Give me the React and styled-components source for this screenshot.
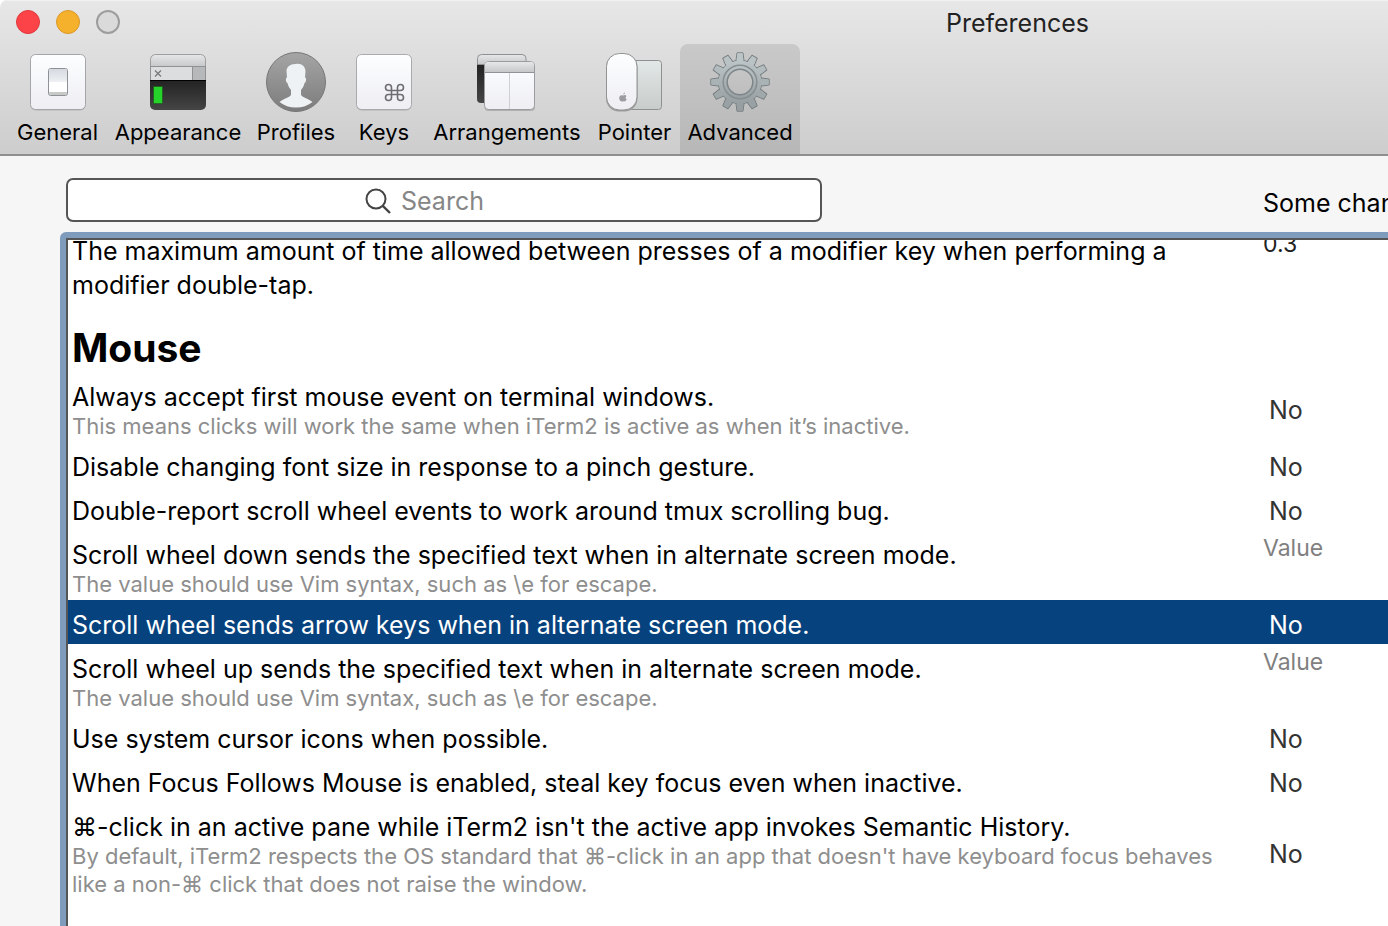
import React from "react";
import styled, { createGlobalStyle, css } from "styled-components";

const GlobalStyle = createGlobalStyle`
  *, *::before, *::after { box-sizing: border-box; }
  html, body, #root { height: 100%; }
  body {
    margin: 0;
    background: #fff;
    color: #000;
    font-family: Inter, "Liberation Sans", sans-serif;
    overflow: hidden;
  }
  button, input, select { font: inherit; color: inherit; margin: 0; }
`;

const Window = styled.div`
  display: flex;
  flex-direction: column;
  height: 100%;
  background: #f6f6f6;
  border-top-left-radius: 8px;
  overflow: hidden;
`;

const Header = styled.header`
  flex: none;
  background: linear-gradient(#e7e7e7, #cdcdcd);
  border-bottom: 2px solid #8f8f8f;
  box-shadow: inset 0 1px 0 #f2f2f2;
`;

const TitleBar = styled.div`
  display: flex;
  align-items: center;
  justify-content: space-between;
  height: 44px;
  padding: 0 299px 0 16px;
`;

const Lights = styled.div`
  display: flex;
  gap: 16px;
`;

const Light = styled.button`
  width: 24px;
  height: 24px;
  padding: 0;
  border: ${(p) => (p.$off ? 2 : 1)}px solid ${(p) => p.$edge};
  border-radius: 50%;
  background: ${(p) => p.$fill};
`;

const Title = styled.h1`
  margin: 0;
  padding-top: 2px;
  font-size: 25px;
  line-height: 32px;
  font-weight: 400;
  color: #222;
`;

const Toolbar = styled.nav`
  display: flex;
  padding-left: 8px;
`;

const Tool = styled.button`
  display: flex;
  flex-direction: column;
  align-items: center;
  gap: 6px;
  flex: none;
  width: ${(p) => p.$width}px;
  height: 110px;
  padding: 8px 0;
  border: 0;
  border-radius: 8px 8px 0 0;
  background: ${(p) => (p.$active ? "linear-gradient(#c9c9c9, #b7b7b7)" : "none")};
  font-size: 22px;
  line-height: 28px;
  white-space: nowrap;
`;

const Body = styled.main`
  flex: 1;
  display: flex;
  flex-direction: column;
  min-height: 0;
  padding: 22px 0 0 60px;
`;

const Controls = styled.div`
  display: flex;
  align-items: center;
  justify-content: space-between;
  padding-left: 6px;
  margin-bottom: 10px;
`;

const SearchBox = styled.label`
  display: flex;
  align-items: center;
  justify-content: center;
  gap: 10px;
  flex: 0 1 756px;
  height: 44px;
  padding-top: 2px;
  border: 2px solid #555;
  border-radius: 7px;
  background: #fff;
`;

const SearchInput = styled.input`
  width: 122px;
  padding: 0;
  border: 0;
  outline: 0;
  background: none;
  font-size: 25px;
  line-height: 32px;
  &::placeholder { color: #868686; opacity: 1; }
`;

const Note = styled.p`
  flex: none;
  width: 125px;
  margin: 0;
  padding-top: 6px;
  font-size: 25px;
  line-height: 32px;
  white-space: nowrap;
  overflow: hidden;
`;

const FocusRing = styled.div`
  flex: 1;
  min-height: 0;
  padding: 6px 0 0 6px;
  background: #7f9cbc;
  border-top-left-radius: 6px;
`;

const Scroller = styled.div`
  height: 100%;
  overflow: hidden;
  border: solid #555;
  border-width: 2px 0 0 2px;
  background: #fff;
`;

const Table = styled.table`
  width: 100%;
  margin-top: -16px;
  border-collapse: collapse;
  table-layout: fixed;
`;

const ValueCol = styled.col`
  width: 132px;
`;

const Row = styled.tr`
  height: 44px;
  ${(p) =>
    p.$selected &&
    css`
      background: #06427e;
      color: #fff;
    `}
`;

const NameCell = styled.td`
  padding: 10px 24px 2px 4px;
  vertical-align: top;
`;

const Name = styled.div`
  font-size: 25px;
  line-height: ${(p) => (p.$wraps ? 34 : 30)}px;
`;

const Hint = styled.div`
  font-size: 22px;
  line-height: 28px;
  color: #8e8e8e;
`;

const GroupCell = styled.th`
  height: 68px;
  padding: 20px 4px 0;
  text-align: left;
  vertical-align: top;
  font-size: 39px;
  line-height: 48px;
  font-weight: 700;
`;

const ValueCell = styled.td`
  padding: ${(p) => (p.$text ? "3px 0 0 7px" : "6px 0 0 13px")};
  vertical-align: ${(p) => (p.$text ? "top" : "middle")};
`;

const Choice = styled.select`
  display: block;
  appearance: none;
  padding: 0;
  border: 0;
  background: none;
  font-size: 25px;
  line-height: 32px;
  color: ${(p) => (p.$selected ? "#fff" : "#333")};
`;

const TextValue = styled.input`
  display: block;
  width: 100%;
  padding: 0;
  border: 0;
  background: none;
  font-size: 23px;
  line-height: ${(p) => (p.$wraps ? 34 : 30)}px;
  height: ${(p) => (p.$wraps ? 34 : 30)}px;
  color: #222;
  &::placeholder { color: #808080; opacity: 1; }
`;

const Art = ({ children }) => (
  <svg width="60" height="60" viewBox="0 0 60 60" aria-hidden="true">
    {children}
  </svg>
);

const Gradients = () => (
  <svg width="0" height="0" aria-hidden="true" display="block">
    <defs>
      <linearGradient id="plate" x2="0" y2="1">
        <stop stopColor="#fcfeff" /><stop offset="1" stopColor="#eeeef3" />
      </linearGradient>
      <linearGradient id="bar" x2="0" y2="1">
        <stop stopColor="#e6e7e8" /><stop offset="1" stopColor="#c6c8ca" />
      </linearGradient>
      <linearGradient id="dark" x2="0" y2="1">
        <stop stopColor="#222" /><stop offset="1" stopColor="#454545" />
      </linearGradient>
      <linearGradient id="disc" x2="0" y2="1">
        <stop stopColor="#a5a5a5" /><stop offset="1" stopColor="#7c7c7c" />
      </linearGradient>
      <linearGradient id="pad" x2="0" y2="1">
        <stop stopColor="#e2e8e7" /><stop offset="1" stopColor="#c8cccb" />
      </linearGradient>
      <linearGradient id="rocker" x2="0" y2="1">
        <stop stopColor="#d6dae0" /><stop offset="1" stopColor="#eef0f3" />
      </linearGradient>
      <linearGradient id="steel" x2="0" y2="1">
        <stop stopColor="#bbc4c6" /><stop offset="1" stopColor="#979fa2" />
      </linearGradient>
      <linearGradient id="hole" x2="0" y2="1">
        <stop stopColor="#c6c6c6" /><stop offset="1" stopColor="#bebebe" />
      </linearGradient>
    </defs>
  </svg>
);

const GeneralIcon = () => (
  <Art>
    <rect x="2.5" y="3.5" width="55" height="55" rx="5" fill="#b5b5b5" />
    <rect x="2.5" y="2.5" width="55" height="55" rx="5" fill="url(#plate)" stroke="#a3a5a9" />
    <rect x="20.5" y="16.5" width="19" height="27" rx="2" fill="#fff" stroke="#8d9095" />
    <rect x="21" y="17" width="18" height="13" rx="1" fill="url(#rocker)" />
    <path d="M21 40h18v2q0 1-1 1H22q-1 0-1-1z" fill="#c7c9c6" />
  </Art>
);

const AppearanceIcon = () => (
  <Art>
    <path d="M2 28H58V53a5 5 0 0 1-5 5H7a5 5 0 0 1-5-5z" fill="url(#dark)" />
    <path d="M2.500 14.500V7.500a5 5 0 0 1 5-5h45a5 5 0 0 1 5 5V14.500z" fill="url(#bar)" stroke="#9b9d9f" />
    <rect x="2" y="15" width="42" height="13" fill="#dcdddf" />
    <rect x="44" y="15" width="14" height="13" fill="#b6b8ba" />
    <path d="M2 14.500H58M44.500 14V28M2.500 14V28M57.500 14V28" stroke="#8f9193" fill="none" />
    <path d="M2 28.500H58" stroke="#000" />
    <path d="M7 18.500l6 6M13 18.500l-6 6" stroke="#777" strokeWidth="1.200" />
    <rect x="5" y="34" width="10" height="18" rx="1" fill="#1b7a1c" opacity=".7" />
    <rect x="6" y="35" width="8" height="16" fill="#25d32b" />
  </Art>
);

const ProfilesIcon = () => (
  <Art>
    <circle cx="30" cy="30" r="29.500" fill="url(#disc)" stroke="#777" />
    <path
      d="M30 12C35 11 39.500 14 39.500 19.500L39 25.500C41 26 40 30.500 38.500 31C38 34 36.500 36 35 38V42.500C36 46 42 46 46.500 50Q39.500 55.500 30 55.500T13.500 50C18 46 24 46 25 42.500V38C23.500 36 22 34 21.500 31C20 30.500 19 26 21 25.500L20.500 19C20.500 14.500 25 11.500 30 12z"
      fill="#eff2f4"
    />
  </Art>
);

const KeysIcon = () => (
  <Art>
    <rect x="2.500" y="3.500" width="55" height="55" rx="5" fill="#b0b0b0" />
    <rect x="2.500" y="2.500" width="55" height="55" rx="5" fill="url(#plate)" stroke="#a9a9ae" />
    <path
      d="M37.500 35.500a3 3 0 1 0-3 3h12a3 3 0 1 0-3-3v10a3 3 0 1 0 3-3h-12a3 3 0 1 0 3 3z"
      fill="none" stroke="#6e6e71" strokeWidth="1.600"
    />
  </Art>
);

const ArrangementsIcon = () => (
  <Art>
    <path d="M0 12H10V51H4a4 4 0 0 1-4-4z" fill="url(#dark)" />
    <path d="M.5 12.500V6.500a4 4 0 0 1 4-4H45a4 4 0 0 1 4 4V12.500z" fill="url(#bar)" stroke="#8f9193" />
    <rect x="7.500" y="10" width="50.500" height="49" rx="4" fill="#b0b0b0" />
    <rect x="7.500" y="9.500" width="50" height="48" rx="4" fill="url(#plate)" stroke="#9b9ca0" />
    <path d="M8 20V13a3 3 0 0 1 3-3H54a3 3 0 0 1 3 3V20z" fill="url(#bar)" />
    <path d="M8 20.500H57" stroke="#909295" />
    <path d="M32.500 21V57" stroke="#cfd0d3" />
  </Art>
);

const PointerIcon = () => (
  <Art>
    <rect x="20" y="8.500" width="36.500" height="49" rx="3" fill="url(#pad)" stroke="#8f9191" />
    <rect x="1" y="2" width="31.500" height="57.500" rx="13" fill="#9c9c9c" />
    <rect x="1.500" y="1.500" width="30.500" height="56.500" rx="13" fill="url(#plate)" stroke="#929292" />
    <path
      d="M18.200 42.500q.1-1.600 1.800-2q0 1.800-1.800 2M18.100 43.500q2.400-1 3.300.4q-1.700 2 .3 3.500q-1.300 2.800-3.500 1.900q-3 1-3.900-2.100q-.6-4.600 3.800-3.700"
      fill="#9c9ca0"
    />
  </Art>
);

const TEETH = Array.from({ length: 12 }, (_, i) => i * 30);
const shade = (deg) => {
  const t = (1 - Math.cos((deg * Math.PI) / 180)) / 2;
  const c = (a, b) => Math.round(a + (b - a) * t);
  return `rgb(${c(187, 151)}, ${c(196, 159)}, ${c(198, 162)})`;
};

const AdvancedIcon = () => (
  <Art>
    <g transform="translate(30 30)">
      {TEETH.map((a) => (
        <path key={a} d="M-4.200-20L-3-29.200H3L4.200-20z" transform={`rotate(${a})`} fill={shade(a)} stroke="#777f81" strokeLinejoin="round" />
      ))}
      <circle r="21.800" fill="url(#steel)" stroke="#777f81" />
      {TEETH.map((a) => (
        <path key={a} d="M-3.600-20L-2.500-28.700H2.500L3.600-20z" transform={`rotate(${a})`} fill={shade(a)} />
      ))}
      <circle r="21.300" fill="url(#steel)" />
      <circle r="16.800" fill="url(#steel)" stroke="#868e91" strokeWidth="1.500" />
      <circle r="12.800" fill="url(#hole)" stroke="#7d8588" strokeWidth="1.500" />
    </g>
  </Art>
);

const TOOLS = [
  { label: "General", width: 99, Icon: GeneralIcon },
  { label: "Appearance", width: 142, Icon: AppearanceIcon },
  { label: "Profiles", width: 94, Icon: ProfilesIcon },
  { label: "Keys", width: 82, Icon: KeysIcon },
  { label: "Arrangements", width: 164, Icon: ArrangementsIcon },
  { label: "Pointer", width: 91, Icon: PointerIcon },
  { label: "Advanced", width: 120, Icon: AdvancedIcon, active: true },
];

const MOUSE_SETTINGS = [
  {
    name: "Always accept first mouse event on terminal windows.",
    hint: "This means clicks will work the same when iTerm2 is active as when it’s inactive.",
  },
  { name: "Disable changing font size in response to a pinch gesture." },
  { name: "Double-report scroll wheel events to work around tmux scrolling bug." },
  {
    name: "Scroll wheel down sends the specified text when in alternate screen mode.",
    hint: "The value should use Vim syntax, such as \\e for escape.",
    text: true,
  },
  { name: "Scroll wheel sends arrow keys when in alternate screen mode.", selected: true },
  {
    name: "Scroll wheel up sends the specified text when in alternate screen mode.",
    hint: "The value should use Vim syntax, such as \\e for escape.",
    text: true,
  },
  { name: "Use system cursor icons when possible." },
  { name: "When Focus Follows Mouse is enabled, steal key focus even when inactive." },
  {
    name: "⌘-click in an active pane while iTerm2 isn't the active app invokes Semantic History.",
    hint: "By default, iTerm2 respects the OS standard that ⌘-click in an app that doesn't have keyboard focus behaves like a non-⌘ click that does not raise the window.",
  },
];

function Setting({ name, hint, text, value, wraps, selected }) {
  return (
    <Row $selected={selected}>
      <NameCell>
        <Name $wraps={wraps}>{name}</Name>
        {hint && <Hint>{hint}</Hint>}
      </NameCell>
      <ValueCell $text={text}>
        {text ? (
          <TextValue aria-label={name} placeholder="Value" defaultValue={value} $wraps={wraps} />
        ) : (
          <Choice aria-label={name} defaultValue="No" $selected={selected}>
            <option>No</option>
            <option>Yes</option>
          </Choice>
        )}
      </ValueCell>
    </Row>
  );
}

export default function App() {
  return (
    <>
      <GlobalStyle />
      <Window>
        <Header>
          <TitleBar>
            <Lights>
              <Light aria-label="Close" $fill="#fc4448" $edge="#e0383c" />
              <Light aria-label="Minimize" $fill="#f5b02c" $edge="#db982a" />
              <Light aria-label="Zoom" $off $fill="#dadada" $edge="#9d9d9d" />
            </Lights>
            <Title>Preferences</Title>
          </TitleBar>
          <Toolbar>
            {TOOLS.map(({ label, width, Icon, active }) => (
              <Tool key={label} $width={width} $active={active}>
                <Icon />
                {label}
              </Tool>
            ))}
          </Toolbar>
        </Header>
        <Body>
          <Controls>
            <SearchBox>
              <svg width="26" height="26" viewBox="0 0 26 26" fill="none" stroke="#444" strokeWidth="2" aria-hidden="true">
                <circle cx="11" cy="11" r="9.500" />
                <path d="M17.800 17.800L25 25" strokeWidth="2.400" />
              </svg>
              <SearchInput aria-label="Search" placeholder="Search" />
            </SearchBox>
            <Note>Some changes</Note>
          </Controls>
          <FocusRing>
            <Scroller>
              <Table>
                <colgroup>
                  <col />
                  <ValueCol />
                </colgroup>
                <tbody>
                  <Setting
                    name="The maximum amount of time allowed between presses of a modifier key when performing a modifier double-tap."
                    text
                    value="0.3"
                    wraps
                  />
                  <tr>
                    <GroupCell colSpan={2} scope="colgroup">Mouse</GroupCell>
                  </tr>
                  {MOUSE_SETTINGS.map((s) => (
                    <Setting key={s.name} {...s} />
                  ))}
                </tbody>
              </Table>
            </Scroller>
          </FocusRing>
        </Body>
      </Window>
      <Gradients />
    </>
  );
}
